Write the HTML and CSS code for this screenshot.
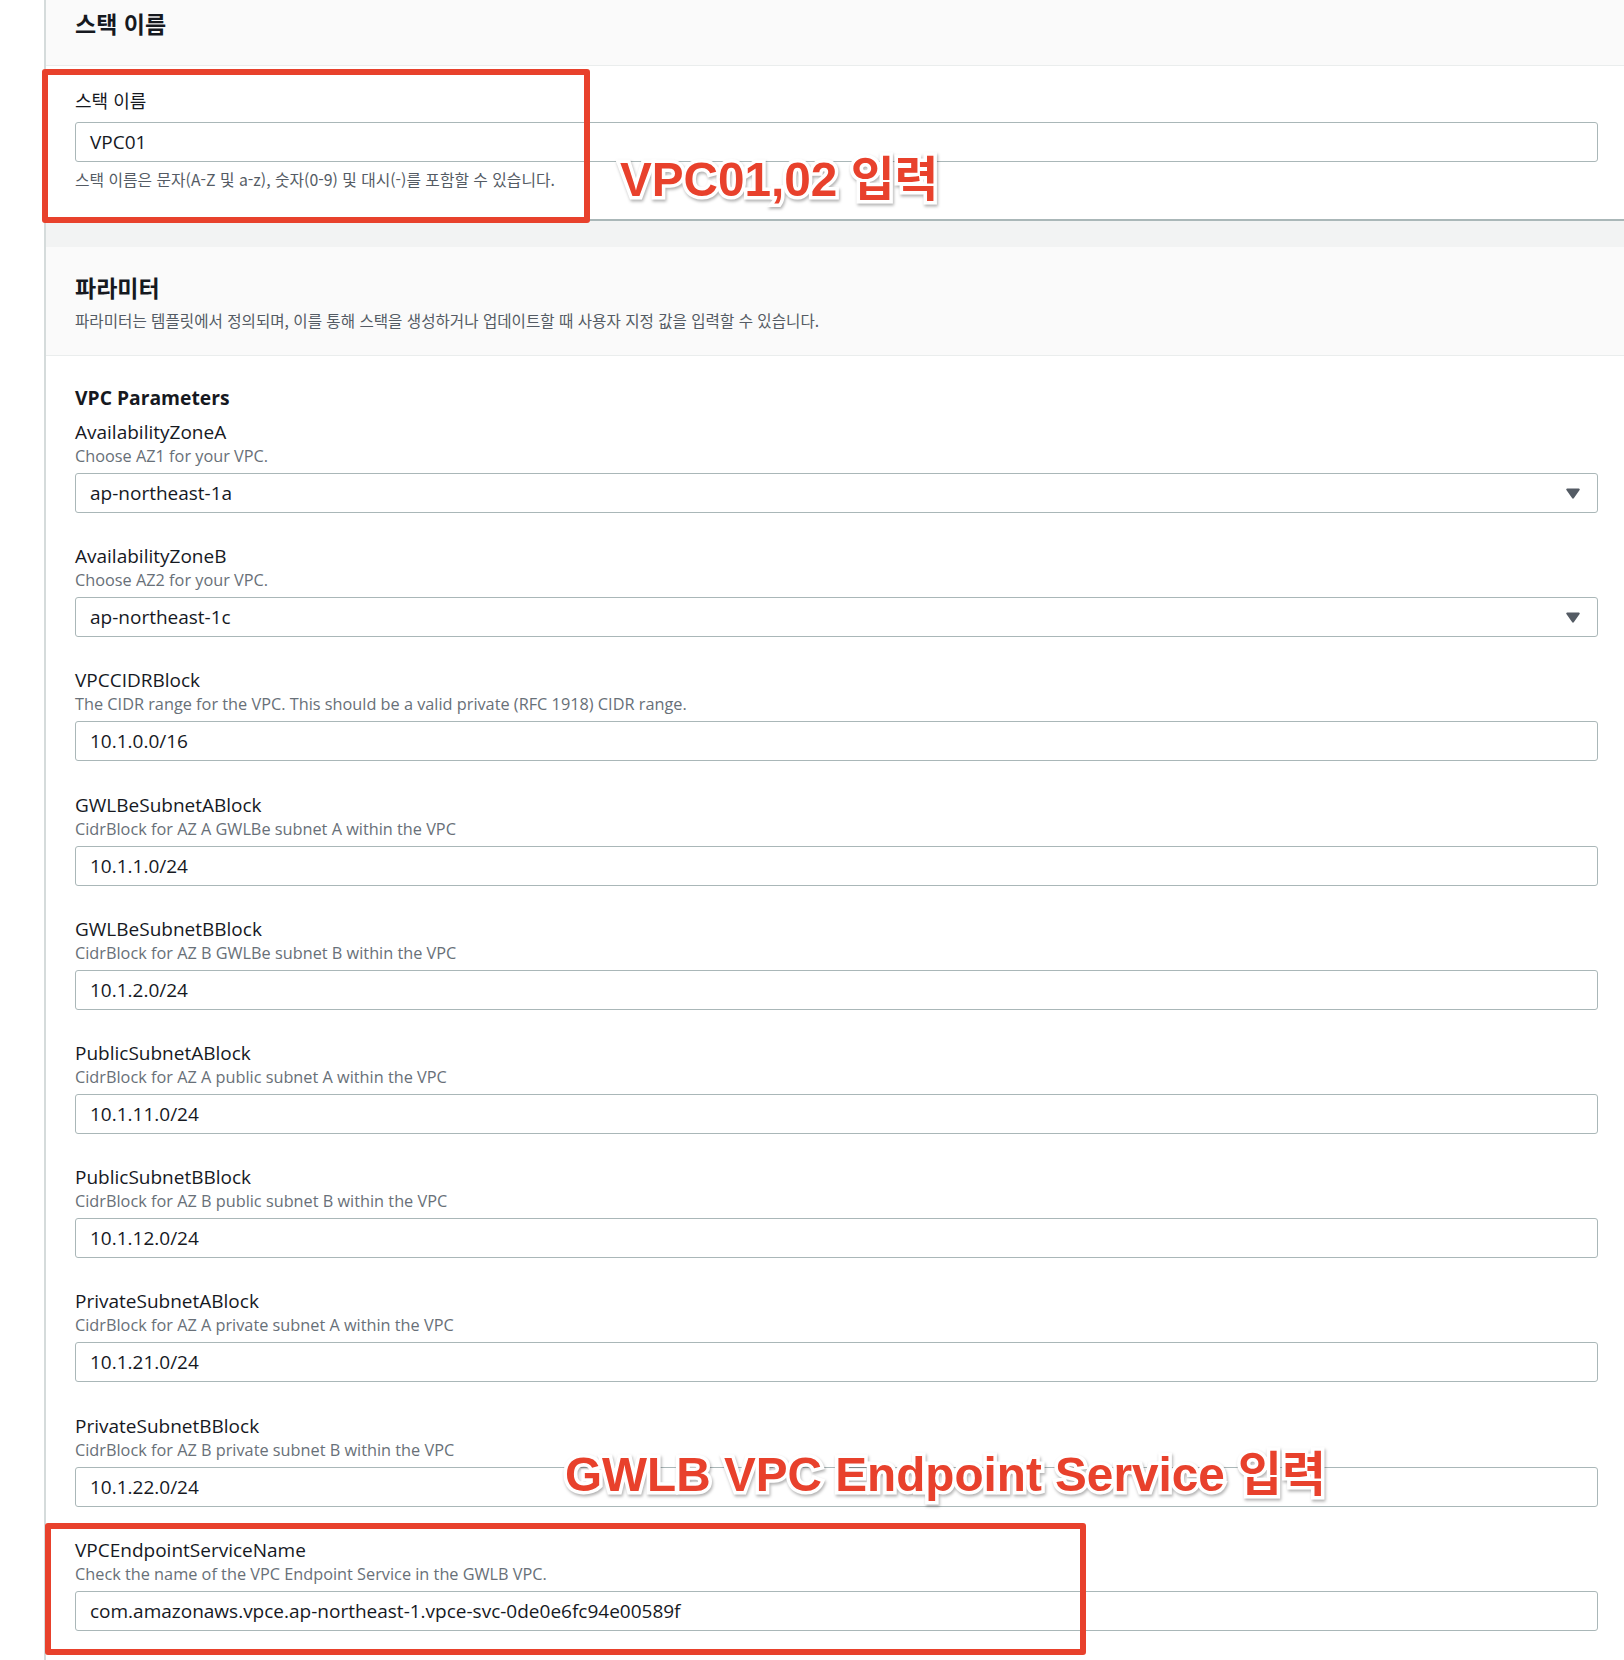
FILE: index.html
```html
<!DOCTYPE html>
<html lang="ko">
<head>
<meta charset="utf-8">
<title>스택 세부 정보 지정</title>
<link rel="stylesheet" href="styles.css">
</head>
<body>
<div class="page">
  <section class="panel panel-stack">
    <header class="panel-head head-stack">
      <h2 class="panel-title">스택 이름</h2>
    </header>
    <div class="panel-body body-stack">
      <div class="ko-label">스택 이름</div>
      <div class="input">VPC01</div>
      <div class="ko-help">스택 이름은 문자(A-Z 및 a-z), 숫자(0-9) 및 대시(-)를 포함할 수 있습니다.</div>
    </div>
  </section>

  <section class="panel panel-params">
    <header class="panel-head head-params">
      <h2 class="panel-title">파라미터</h2>
      <p class="ko-desc">파라미터는 템플릿에서 정의되며, 이를 통해 스택을 생성하거나 업데이트할 때 사용자 지정 값을 입력할 수 있습니다.</p>
    </header>
    <div class="panel-body body-params">
      <h3 class="group-title">VPC Parameters</h3>

      <div class="field">
        <div class="label">AvailabilityZoneA</div>
        <div class="desc">Choose AZ1 for your VPC.</div>
        <div class="input select">ap-northeast-1a<svg class="caret" viewBox="0 0 14 11" width="14" height="11"><path d="M1.2 0.5h11.6c0.8 0 1.2 0.8 0.8 1.4l-5.8 8.4c-0.4 0.6-1.2 0.6-1.6 0l-5.8-8.4c-0.4-0.6 0-1.4 0.8-1.4z"/></svg></div>
      </div>

      <div class="field">
        <div class="label">AvailabilityZoneB</div>
        <div class="desc">Choose AZ2 for your VPC.</div>
        <div class="input select">ap-northeast-1c<svg class="caret" viewBox="0 0 14 11" width="14" height="11"><path d="M1.2 0.5h11.6c0.8 0 1.2 0.8 0.8 1.4l-5.8 8.4c-0.4 0.6-1.2 0.6-1.6 0l-5.8-8.4c-0.4-0.6 0-1.4 0.8-1.4z"/></svg></div>
      </div>

      <div class="field">
        <div class="label">VPCCIDRBlock</div>
        <div class="desc">The CIDR range for the VPC. This should be a valid private (RFC 1918) CIDR range.</div>
        <div class="input">10.1.0.0/16</div>
      </div>

      <div class="field">
        <div class="label">GWLBeSubnetABlock</div>
        <div class="desc">CidrBlock for AZ A GWLBe subnet A within the VPC</div>
        <div class="input">10.1.1.0/24</div>
      </div>

      <div class="field">
        <div class="label">GWLBeSubnetBBlock</div>
        <div class="desc">CidrBlock for AZ B GWLBe subnet B within the VPC</div>
        <div class="input">10.1.2.0/24</div>
      </div>

      <div class="field">
        <div class="label">PublicSubnetABlock</div>
        <div class="desc">CidrBlock for AZ A public subnet A within the VPC</div>
        <div class="input">10.1.11.0/24</div>
      </div>

      <div class="field">
        <div class="label">PublicSubnetBBlock</div>
        <div class="desc">CidrBlock for AZ B public subnet B within the VPC</div>
        <div class="input">10.1.12.0/24</div>
      </div>

      <div class="field">
        <div class="label">PrivateSubnetABlock</div>
        <div class="desc">CidrBlock for AZ A private subnet A within the VPC</div>
        <div class="input">10.1.21.0/24</div>
      </div>

      <div class="field">
        <div class="label">PrivateSubnetBBlock</div>
        <div class="desc">CidrBlock for AZ B private subnet B within the VPC</div>
        <div class="input">10.1.22.0/24</div>
      </div>

      <div class="field">
        <div class="label">VPCEndpointServiceName</div>
        <div class="desc">Check the name of the VPC Endpoint Service in the GWLB VPC.</div>
        <div class="input">com.amazonaws.vpce.ap-northeast-1.vpce-svc-0de0e6fc94e00589f</div>
      </div>
    </div>
  </section>
</div>

<div class="mark mark-stack"></div>
<div class="note note-stack">VPC01,02 입력</div>
<div class="mark mark-endpoint"></div>
<div class="note note-endpoint">GWLB VPC Endpoint Service 입력</div>
</body>
</html>
```

FILE: styles.css
```css
html, body {
  margin: 0;
  padding: 0;
  background: #ffffff;
}

body {
  position: relative;
  width: 1624px;
  height: 1660px;
  overflow: hidden;
  font-family: "Open Sans", "Noto Sans CJK KR", sans-serif;
  color: #16191f;
}

.page {
  margin-left: 44px;
  border-left: 2px solid #d5dbdb;
  background: #f2f3f3;
  height: 1660px;
  display: flex;
  flex-direction: column;
}

.panel {
  background: #ffffff;
}

.panel-params {
  flex: 1;
}

.panel-head {
  background: #fafafa;
  border-bottom: 1px solid #eaeded;
  padding: 0 26px 0 29px;
}

.panel-title {
  margin: 0;
  font-family: "Noto Sans CJK KR", sans-serif;
  font-size: 23px;
  line-height: 30px;
  font-weight: 700;
  color: #16191f;
}

.head-stack {
  padding-top: 8px;
  box-sizing: border-box;
  height: 66px;
}

.panel-stack {
  border-bottom: 2px solid #aab7b8;
  margin-bottom: 26px;
}

.body-stack {
  padding: 22px 26px 29px 29px;
  height: 153px;
  box-sizing: border-box;
}

.ko-label {
  font-family: "Noto Sans CJK KR", sans-serif;
  font-size: 18px;
  line-height: 24px;
  color: #16191f;
  margin-bottom: 10px;
}

.ko-help {
  font-family: "Noto Sans CJK KR", sans-serif;
  font-size: 15.8px;
  line-height: 20px;
  color: #545b64;
  margin-top: 8px;
}

.head-params {
  padding-top: 25px;
  padding-bottom: 25px;
}

.ko-desc {
  margin: 8px 0 0;
  font-family: "Noto Sans CJK KR", sans-serif;
  font-size: 15.6px;
  line-height: 20px;
  color: #545b64;
}

.body-params {
  padding: 30px 26px 0 29px;
}

.group-title {
  margin: 0 0 10px;
  font-size: 19.3px;
  line-height: 24px;
  font-weight: 700;
  color: #16191f;
}

.field {
  margin-bottom: 31.2px;
}

.label {
  font-size: 19px;
  line-height: 24px;
  color: #16191f;
}

.desc {
  font-size: 16.3px;
  line-height: 22px;
  margin-top: 1px;
  color: #687078;
}

.field .input {
  margin-top: 6px;
}

.input {
  position: relative;
  height: 40px;
  box-sizing: border-box;
  border: 1px solid #aab7b8;
  border-radius: 3px;
  background: #ffffff;
  padding: 0 14px;
  display: flex;
  align-items: center;
  font-size: 19px;
  color: #16191f;
}

.select {
  justify-content: space-between;
}

.caret {
  fill: #545b64;
  margin-right: 3px;
}

/* annotation overlays */
.mark {
  position: absolute;
  border: 6px solid #e8412c;
  border-radius: 3px;
  box-sizing: border-box;
}

.mark-stack {
  left: 42px;
  top: 69px;
  width: 548px;
  height: 154px;
}

.mark-endpoint {
  left: 45px;
  top: 1523px;
  width: 1041px;
  height: 132px;
}

.note {
  position: absolute;
  font-family: "Liberation Sans", "Noto Sans CJK KR", sans-serif;
  font-weight: 700;
  color: #e8412c;
  white-space: nowrap;
  -webkit-text-stroke: 7px #ffffff;
  paint-order: stroke fill;
  filter: drop-shadow(1px 2px 1.5px rgba(0, 0, 0, 0.3));
  line-height: 1;
}

.note-stack {
  left: 620px;
  top: 156px;
  font-size: 47.7px;
}

.note-endpoint {
  left: 565px;
  top: 1451px;
  font-size: 47.7px;
}
```
